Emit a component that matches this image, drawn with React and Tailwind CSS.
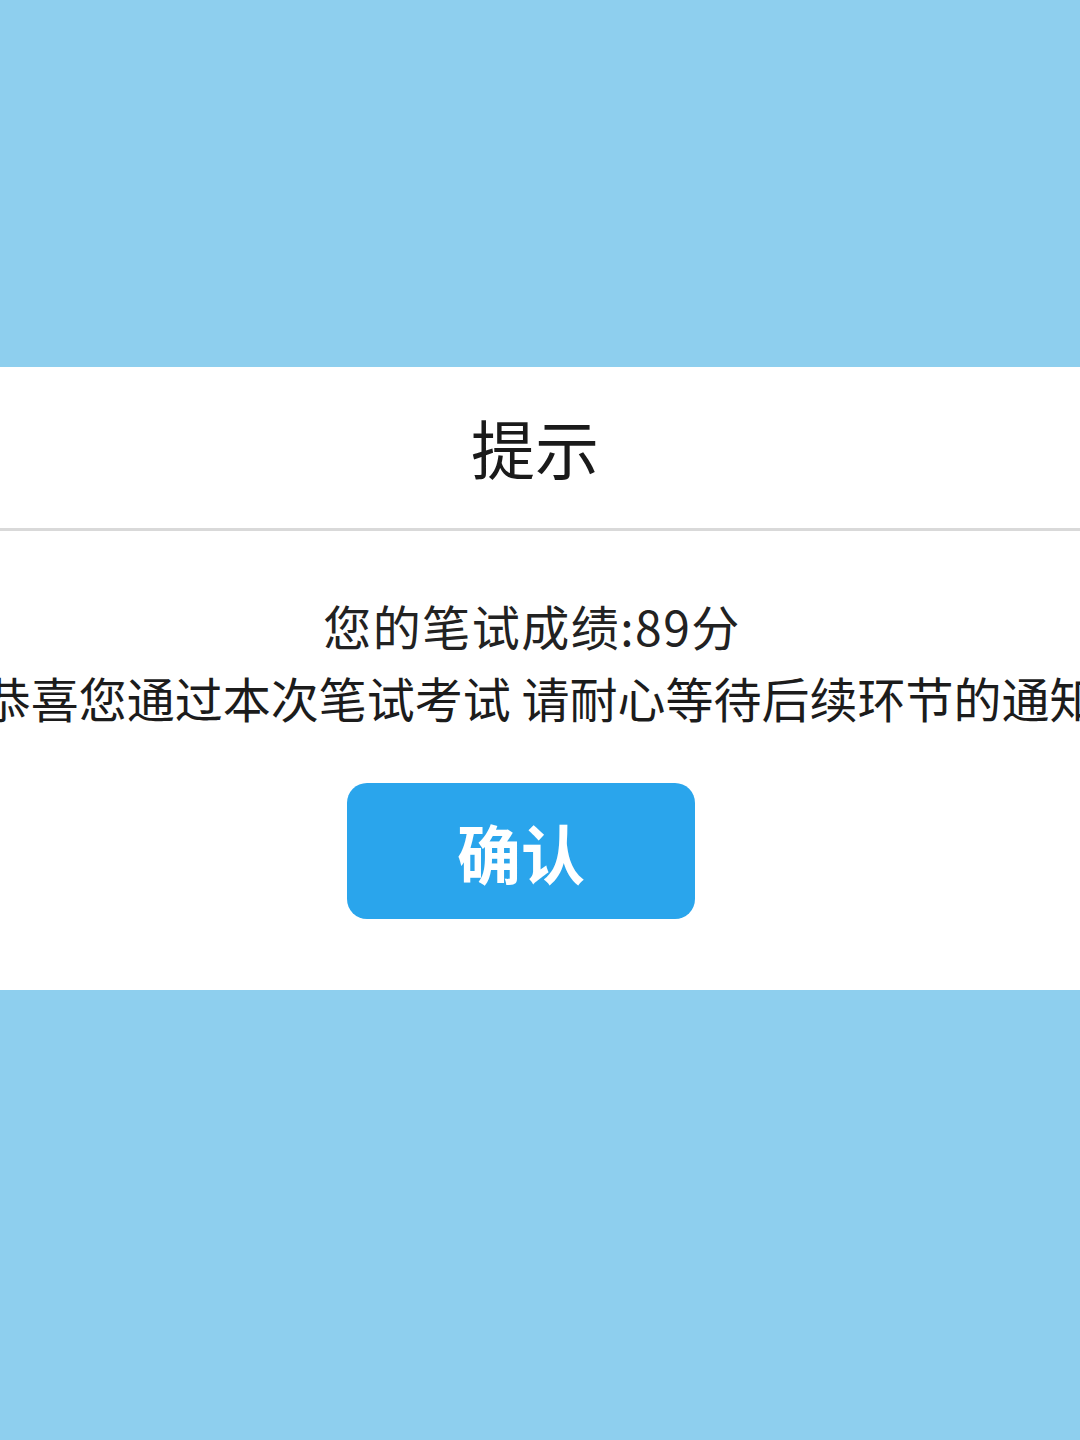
export default function App() {
  return (
    <div
      className="h-[1440px] w-full overflow-hidden bg-[#8ecfee] pt-[367px]"
      style={{ fontFamily: '"Noto Sans CJK SC", "Noto Sans", sans-serif' }}
    >
      <div className="flex flex-col bg-white">
        {/* Header */}
        <div className="flex h-[161px] items-center justify-center pr-[10px] pb-[4px]">
          <h1 className="text-[64px] leading-none font-normal text-[#1a1a1a]">提示</h1>
        </div>
        <div className="h-[3px] bg-[#d9d9d9]" />

        {/* Body */}
        <div className="flex flex-col pt-[66px] pb-[71px]">
          <p className="pr-[16px] text-center text-[48px] leading-[56px] tracking-[1.5px] text-[#222222]">
            您的笔试成绩:89分
          </p>
          <div className="mt-[16px] flex justify-center overflow-hidden">
            <p className="shrink-0 whitespace-nowrap text-[48px] leading-[56px] text-[#1c1c1c]">
              恭喜您通过本次笔试考试 请耐心等待后续环节的通知
            </p>
          </div>
          <button className="mt-[58px] ml-[347px] flex h-[136px] w-[348px] items-center justify-center rounded-[20px] bg-[#2aa5ec] text-[64px] leading-none font-bold text-white">
            确认
          </button>
        </div>
      </div>
    </div>
  );
}
